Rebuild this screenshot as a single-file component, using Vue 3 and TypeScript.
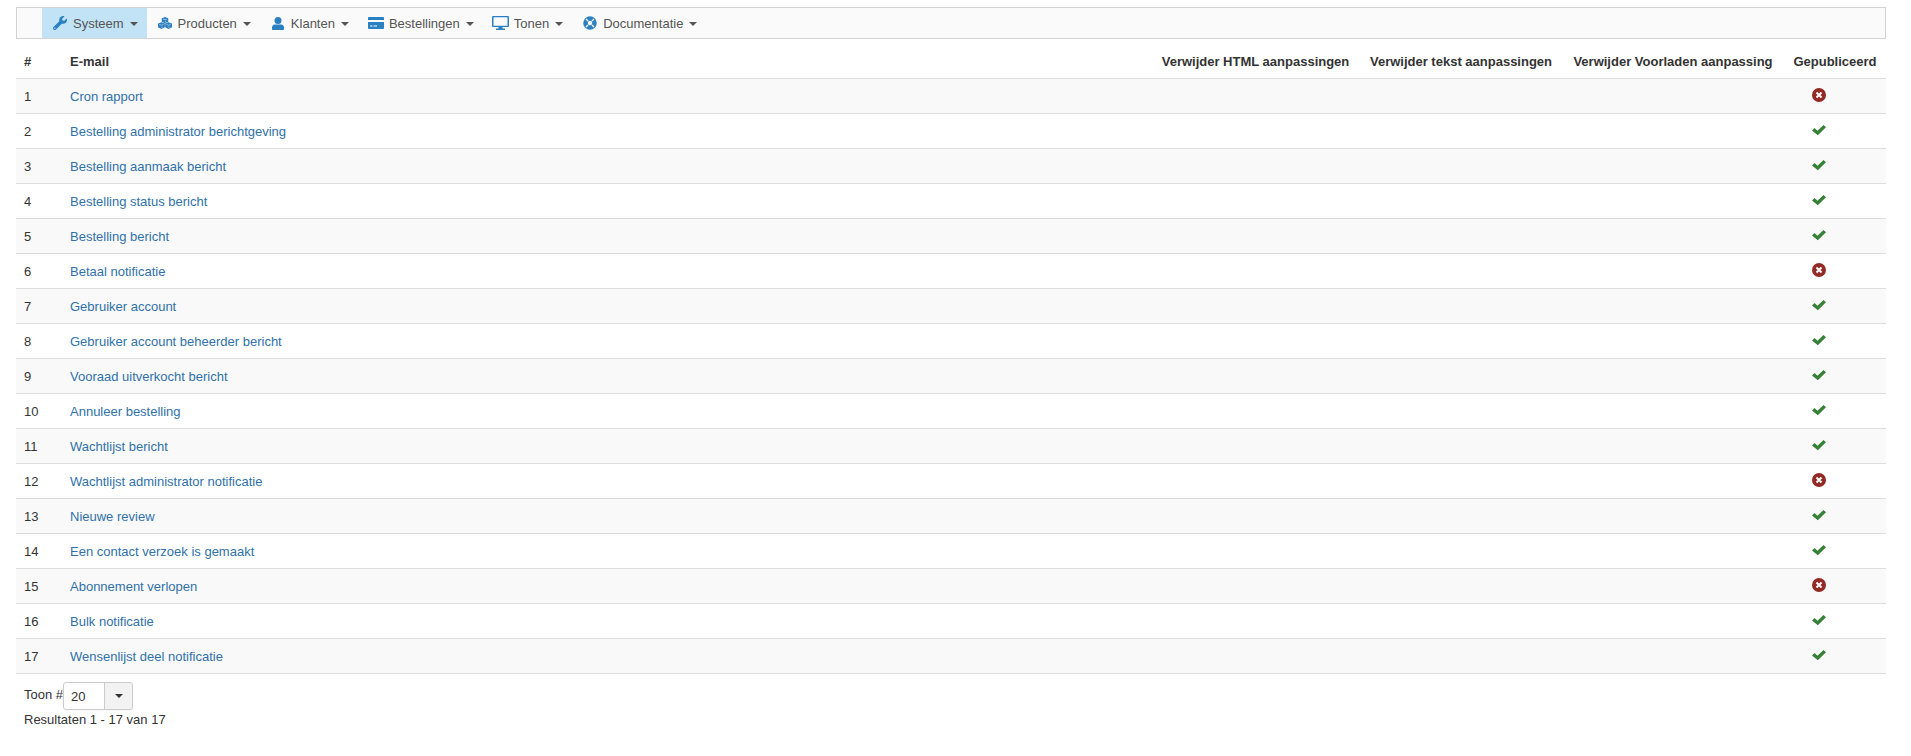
<script setup lang="ts">
import { ref } from 'vue'

type IconName = 'wrench' | 'cubes' | 'user' | 'card' | 'screen' | 'ring'

interface MenuItem {
  label: string
  icon: IconName
  active?: boolean
}

interface MailRow {
  name: string
  published: boolean
}

const menu: MenuItem[] = [
  { label: 'Systeem', icon: 'wrench', active: true },
  { label: 'Producten', icon: 'cubes' },
  { label: 'Klanten', icon: 'user' },
  { label: 'Bestellingen', icon: 'card' },
  { label: 'Tonen', icon: 'screen' },
  { label: 'Documentatie', icon: 'ring' },
]

const rows = ref<MailRow[]>([
  { name: 'Cron rapport', published: false },
  { name: 'Bestelling administrator berichtgeving', published: true },
  { name: 'Bestelling aanmaak bericht', published: true },
  { name: 'Bestelling status bericht', published: true },
  { name: 'Bestelling bericht', published: true },
  { name: 'Betaal notificatie', published: false },
  { name: 'Gebruiker account', published: true },
  { name: 'Gebruiker account beheerder bericht', published: true },
  { name: 'Vooraad uitverkocht bericht', published: true },
  { name: 'Annuleer bestelling', published: true },
  { name: 'Wachtlijst bericht', published: true },
  { name: 'Wachtlijst administrator notificatie', published: false },
  { name: 'Nieuwe review', published: true },
  { name: 'Een contact verzoek is gemaakt', published: true },
  { name: 'Abonnement verlopen', published: false },
  { name: 'Bulk notificatie', published: true },
  { name: 'Wensenlijst deel notificatie', published: true },
])

const limit = ref('20')
</script>

<template>
  <div class="page">
    <nav class="bar">
      <ul class="menu">
        <li v-for="item in menu" :key="item.label">
          <button type="button" class="item" :class="{ active: item.active }" aria-haspopup="true">
            <span class="slot">
              <svg v-if="item.icon === 'wrench'" width="14" height="14" viewBox="0 0 512 512">
                <path d="M507.73 109.1c-2.24-9.03-13.54-12.09-20.12-5.51l-74.36 74.36-67.88-11.31-11.31-67.88 74.36-74.36c6.62-6.62 3.43-17.9-5.66-20.16-47.38-11.74-99.55.91-136.58 37.93-39.64 39.64-50.55 97.1-34.05 147.2L18.74 402.76c-24.99 24.99-24.99 65.51 0 90.5 24.99 24.99 65.51 24.99 90.5 0l213.21-213.21c50.12 16.71 107.47 5.68 147.37-34.22 37.07-37.07 49.7-89.32 37.91-136.73zM64 472c-13.25 0-24-10.75-24-24 0-13.26 10.75-24 24-24s24 10.74 24 24c0 13.25-10.75 24-24 24z" />
              </svg>
              <svg v-else-if="item.icon === 'cubes'" width="14" height="12" viewBox="0 0 28 24">
                <path d="M14 0l6.500 2.500v7l-6.500 3-6.500-3v-7zM7 10.500l6.700 2.500v7.500L7 24l-7-3.500V13zM21 10.500l7 2.500v7.500L21 24l-6.700-3.500V13z" />
                <path class="edge" d="M10 4l4 1.500L18 4M15 7.500v3M2.500 14.500L7 16.500l4-2M8 19v3.500M17 14.500l4 2 4.500-2M22 19v3.500" />
              </svg>
              <svg v-else-if="item.icon === 'user'" width="12" height="13" viewBox="0 0 24 26">
                <circle cx="12" cy="7" r="7" />
                <path d="M6 15h12c4 0 6 3 6 6v3c0 1.200-.8 2-2 2H2c-1.200 0-2-.8-2-2v-3c0-3 2-6 6-6z" />
              </svg>
              <svg v-else-if="item.icon === 'card'" width="16" height="12" viewBox="0 0 16 12">
                <path fill-rule="evenodd" d="M1 0h14a1 1 0 0 1 1 1v2H0V1a1 1 0 0 1 1-1zM0 5h16v6a1 1 0 0 1-1 1H1a1 1 0 0 1-1-1zM2 8.500v1h2.500v-1zM5.500 8.500v1H9v-1z" />
              </svg>
              <svg v-else-if="item.icon === 'screen'" width="17" height="14" viewBox="0 0 17 14">
                <path fill-rule="evenodd" d="M1 0h15a1 1 0 0 1 1 1v9a1 1 0 0 1-1 1h-5.500v1.500H13V14H4v-1.500h2.500V11H1a1 1 0 0 1-1-1V1a1 1 0 0 1 1-1zM1.500 1.300v8.400h14V1.300z" />
              </svg>
              <svg v-else width="14" height="14" viewBox="0 0 28 28">
                <circle class="hoop" cx="14" cy="14" r="9" />
                <path class="notch" d="M6 6l4 4M22 6l-4 4M6 22l4-4M22 22l-4-4" />
              </svg>
            </span>
            <span class="label">{{ item.label }}</span>
            <i class="caret"></i>
          </button>
        </li>
      </ul>
    </nav>

    <table class="mails">
      <colgroup>
        <col class="c-num" />
        <col />
        <col class="c-html" />
        <col class="c-text" />
        <col class="c-preload" />
        <col class="c-state" />
      </colgroup>
      <thead>
        <tr>
          <th>#</th>
          <th>E-mail</th>
          <th class="mid">Verwijder HTML aanpassingen</th>
          <th class="mid">Verwijder tekst aanpassingen</th>
          <th class="mid">Verwijder Voorladen aanpassing</th>
          <th class="mid">Gepubliceerd</th>
        </tr>
      </thead>
      <tbody>
        <tr v-for="(row, index) in rows" :key="row.name">
          <td>{{ index + 1 }}</td>
          <td><a href="#">{{ row.name }}</a></td>
          <td></td>
          <td></td>
          <td></td>
          <td class="state">
            <button
              type="button"
              class="toggle"
              :class="row.published ? 'on' : 'off'"
              :aria-label="row.name"
              :aria-pressed="row.published"
              @click="row.published = !row.published"
            >
              <svg v-if="row.published" width="14" height="12" viewBox="0 0 14 12">
                <path d="M0 6.500L2.500 4l3 2.800L11.500 1 14 3.200 5.800 11.200z" />
              </svg>
              <svg v-else width="14" height="14" viewBox="0 0 14 14">
                <circle cx="7" cy="7" r="7" />
                <path class="cross" d="M4.500 4.500l5 5M9.500 4.500l-5 5" />
              </svg>
            </button>
          </td>
        </tr>
      </tbody>
      <tfoot>
        <tr>
          <td colspan="6">
            <div class="pager">
              <label for="limit">Toon #</label>
              <span class="picker">
                <select id="limit" v-model="limit">
                  <option>5</option>
                  <option>10</option>
                  <option>20</option>
                  <option>50</option>
                  <option>100</option>
                </select>
                <i class="caret"></i>
              </span>
            </div>
            <div>Resultaten 1 - 17 van 17</div>
          </td>
        </tr>
      </tfoot>
    </table>
  </div>
</template>

<style>
body {
  margin: 0;
  background: #fff;
}
</style>

<style scoped>
.page {
  padding: 7px 25px 20px 16px;
  font-family: "Liberation Sans", Arial, sans-serif;
  font-size: 13px;
  line-height: 18px;
  color: #333;
}

.bar {
  border: 1px solid #d3d3d3;
  background: #fafafa;
  margin-bottom: 5px;
}

.menu {
  display: flex;
  list-style: none;
  margin: 0;
  padding: 0 0 0 25px;
}

.item {
  display: flex;
  align-items: center;
  height: 30px;
  padding: 0 9px;
  border: 0;
  background: none;
  font: inherit;
  color: #555;
  cursor: pointer;
}

.item.active {
  background: #c1e3f5;
}

.label {
  padding-top: 2px;
}

.slot {
  display: flex;
  justify-content: center;
  width: 18px;
  margin-right: 4px;
}

.slot svg {
  fill: #2a80c0;
}

.slot .edge {
  fill: none;
  stroke: #fafafa;
  stroke-width: 1;
}

.slot .hoop {
  fill: none;
  stroke: #2a80c0;
  stroke-width: 9;
}

.slot .notch {
  stroke: #fafafa;
  stroke-width: 3;
}

.caret {
  width: 0;
  height: 0;
  border: 4px solid transparent;
  border-top-color: #555;
  border-bottom: 0;
}

.item .caret {
  margin: 2px 0 0 6px;
}

.mails {
  width: 100%;
  table-layout: fixed;
  border-collapse: separate;
  border-spacing: 0;
}

.c-num {
  width: 46px;
}

.c-html {
  width: 209px;
}

.c-text {
  width: 202px;
}

.c-preload {
  width: 222px;
}

.c-state {
  width: 102px;
}

th,
td {
  padding: 9px 8px 7px;
  text-align: left;
  vertical-align: top;
}

th {
  white-space: nowrap;
}

.mid {
  padding-right: 0;
  padding-left: 0;
  text-align: center;
}

td {
  border-top: 1px solid #ddd;
}

tbody tr:nth-child(odd) td {
  background: #f9f9f9;
}

a {
  color: #3071a9;
  text-decoration: none;
}

td.state {
  padding-right: 40px;
  text-align: center;
}

.toggle {
  display: inline-flex;
  align-items: center;
  justify-content: center;
  width: 14px;
  height: 14px;
  padding: 0;
  border: 0;
  background: none;
  vertical-align: top;
  cursor: pointer;
}

.on {
  fill: #378137;
}

.off {
  fill: #942a25;
}

.cross {
  stroke: #fff;
  stroke-width: 2;
}

tfoot td {
  padding-top: 8px;
}

.pager {
  display: flex;
  align-items: flex-start;
  margin-bottom: 1px;
}

.pager label {
  padding-top: 4px;
}

.picker {
  position: relative;
  display: block;
}

.picker select {
  display: block;
  appearance: none;
  width: 70px;
  height: 28px;
  padding: 2px 7px 0;
  border: 1px solid #ccc;
  border-radius: 3px;
  background: linear-gradient(to right, #fff 40px, #ccc 40px, #ccc 41px, #f2f2f2 41px);
  box-shadow: 0 1px 2px rgba(0, 0, 0, 0.05);
  font: inherit;
  color: #333;
}

.picker .caret {
  position: absolute;
  right: 10px;
  top: 12px;
  border-top-color: #333;
  pointer-events: none;
}
</style>
